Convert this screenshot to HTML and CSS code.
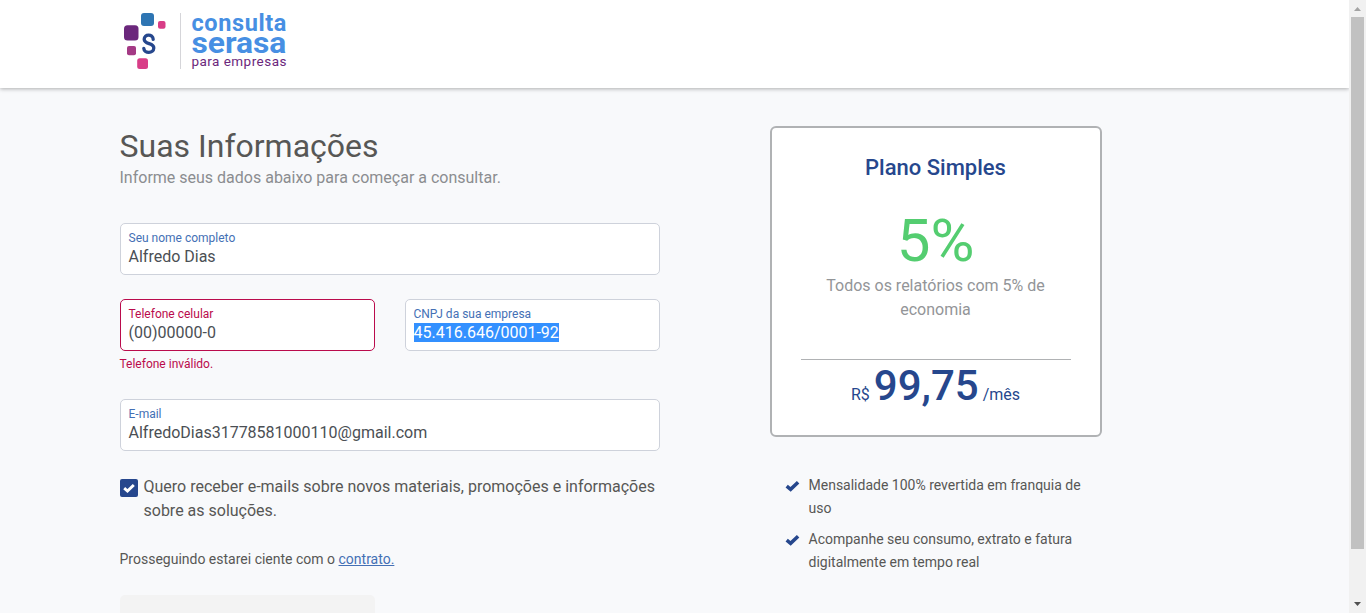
FILE: index.html
```html
<!DOCTYPE html>
<html lang="pt-BR">
<head>
<meta charset="utf-8">
<title>Consulta Serasa para Empresas</title>
<link rel="stylesheet" href="styles.css">
</head>
<body>
<div class="window">
  <div class="page">
    <header class="header">
      <svg class="logo" width="180" height="88" viewBox="120 0 180 88">
        <rect x="141" y="13" width="13" height="13" rx="3" fill="#2e75b3"/>
        <rect x="158" y="21" width="7.5" height="7.7" rx="2" fill="#d83d87"/>
        <rect x="124" y="25.3" width="14.5" height="15.2" rx="3.5" fill="#6b277c"/>
        <rect x="127" y="46" width="9" height="9.3" rx="2" fill="#a43a85"/>
        <rect x="137.2" y="58.2" width="10.8" height="10.8" rx="2.5" fill="#d83d87"/>
        <path d="M153.2 39.3C152.9 33.6 144.1 33.8 144.2 39.2C144.3 44.9 153.9 42.5 153.8 48C153.7 53.8 144.1 53.8 143.8 48.3" fill="none" stroke="#26478d" stroke-width="3.3" stroke-linecap="round"/>
        <path d="M180.5 13V69" stroke="#d5d5d9"/>
        <g class="logo-text">
          <text class="logo-name" x="191.4" y="30.6" font-size="23.5" textLength="95" lengthAdjust="spacing">consulta</text>
          <text class="logo-name" x="191.4" y="52.6" font-size="29" textLength="95" lengthAdjust="spacingAndGlyphs">serasa</text>
          <text class="logo-sub" x="191.4" y="66.3" font-size="13.5" textLength="95" lengthAdjust="spacing">para empresas</text>
        </g>
      </svg>
    </header>
    <main class="main">
      <form class="form">
        <h1 class="title">Suas Informações</h1>
        <p class="subtitle">Informe seus dados abaixo para começar a consultar.</p>
        <div class="field"><label class="label">Seu nome completo</label><span class="value">Alfredo Dias</span></div>
        <div class="row">
          <div class="col">
            <div class="field invalid"><label class="label">Telefone celular</label><span class="value">(00)00000-0</span></div>
            <p class="error">Telefone inválido.</p>
          </div>
          <div class="col">
            <div class="field"><label class="label">CNPJ da sua empresa</label><span class="value selected">45.416.646/0001-92</span></div>
          </div>
        </div>
        <div class="field"><label class="label">E-mail</label><span class="value">AlfredoDias31778581000110@gmail.com</span></div>
        <div class="optin">
          <span class="box"><svg width="12" height="10" viewBox="0 0 14 11"><path d="M1.4 5.7L5.2 9L12.6 2" fill="none" stroke="#fff" stroke-width="3.4"/></svg></span>
          <span>Quero receber e-mails sobre novos materiais, promoções e informações sobre as soluções.</span>
        </div>
        <p class="terms">Prosseguindo estarei ciente com o <a class="link" href="#">contrato.</a></p>
        <div class="submit"></div>
      </form>
      <aside class="aside">
        <section class="card">
          <h2 class="plan">Plano Simples</h2>
          <div class="percent">5%</div>
          <p class="desc">Todos os relatórios com 5% de economia</p>
          <div class="price">R$ <strong class="amount">99,75</strong> /mês</div>
        </section>
        <ul class="benefits">
          <li class="benefit"><svg class="check" width="15" height="12" viewBox="0 0 15 12"><path d="M1.7 6.2L5.6 9.3L13.1 2.3" fill="none" stroke="#26478d" stroke-width="3.6"/></svg><span>Mensalidade 100% revertida em franquia de uso</span></li>
          <li class="benefit"><svg class="check" width="15" height="12" viewBox="0 0 15 12"><path d="M1.7 6.2L5.6 9.3L13.1 2.3" fill="none" stroke="#26478d" stroke-width="3.6"/></svg><span>Acompanhe seu consumo, extrato e fatura digitalmente em tempo real</span></li>
        </ul>
      </aside>
    </main>
  </div>
  <div class="scrollbar">
    <svg width="17" height="17"><path d="M5 11h7L8.5 7z" fill="#a3a3a3"/></svg>
    <div class="thumb"></div>
    <svg class="down" width="17" height="17"><path d="M5 6h7L8.5 10z" fill="#505050"/></svg>
  </div>
</div>
</body>
</html>
```

FILE: styles.css
```css
* { box-sizing: border-box; }
body { margin: 0; font-family: Roboto, sans-serif; font-size: 16px; line-height: 24px; color: #575755; background: #f8f9fb; overflow: hidden; }
h1, h2, p, ul { margin: 0; padding: 0; font-weight: 400; }
.window { display: flex; height: 613px; overflow: hidden; }
.page { width: 1349px; height: 613px; overflow: hidden; flex: none; }
.header { height: 88px; padding-left: 120px; background: #fff; box-shadow: 0 1px 4px rgba(0,0,0,.3); }
.logo { display: block; }
.logo-text { font-family: Roboto, sans-serif; }
.logo-name { font-weight: 700; fill: #478fe3; }
.logo-sub { fill: #6b277c; font-weight: 400; }
.main { display: flex; padding: 38px 0 0 119.5px; gap: 110px; }
.form { width: 540px; flex: none; }
.title { font-size: 32px; line-height: 40px; }
.subtitle { color: #8b8d90; margin-bottom: 33px; }
.field { height: 52px; border: 1px solid #ced2db; border-radius: 5px; background: #fff; padding: 6px 8px 0; display: flex; flex-direction: column; align-items: flex-start; margin-bottom: 24px; }
.label { font-size: 12px; line-height: 17px; color: #4470b5; }
.value { line-height: 19px; color: #4b4f54; }
.selected { background: #3390ff; color: #fff; }
.row { display: flex; gap: 30px; height: 100px; }
.col { width: 255px; }
.invalid { border-color: #ba0b4c; margin-bottom: 4px; }
.invalid .label, .error { color: #ba0b4c; }
.error { font-size: 12px; line-height: 18px; }
.optin { display: flex; gap: 6px; }
.box { width: 18px; height: 18px; flex: none; margin: 4px 0 0 0; border-radius: 2px; background: #26478d; display: flex; align-items: center; justify-content: center; }
.terms { font-size: 14px; line-height: 20px; margin-top: 26px; }
.link { color: #4470b5; }
.submit { width: 255px; height: 48px; margin-top: 26px; border-radius: 5px; background: #f3f3f3; }
.aside { width: 332px; flex: none; }
.card { height: 311px; border: 2px solid #b0b2b4; border-radius: 6px; background: #fff; padding: 26px 29px 0; text-align: center; }
.plan { font-size: 22px; line-height: 28px; font-weight: 500; color: #26478d; }
.percent { font-size: 60px; line-height: 70px; padding-top: 24px; height: 92px; color: #54cd70; }
.desc { color: #939598; padding: 0 20px 37px; border-bottom: 1px solid #b0b2b4; }
.price { color: #26478d; line-height: 50px; padding-top: 1px; }
.amount { font-size: 42px; font-weight: 500; }
.benefits { list-style: none; padding: 37px 15px 0; font-size: 14px; line-height: 23px; }
.benefit { display: flex; gap: 9px; margin-bottom: 8px; }
.check { flex: none; margin-top: 6px; }
.scrollbar { width: 17px; height: 613px; background: #f1f1f1; display: flex; flex-direction: column; }
.scrollbar svg { display: block; flex: none; }
.thumb { width: 13px; height: 532px; margin-left: 2px; background: #c1c1c1; }
.down { margin-top: auto; }
```
